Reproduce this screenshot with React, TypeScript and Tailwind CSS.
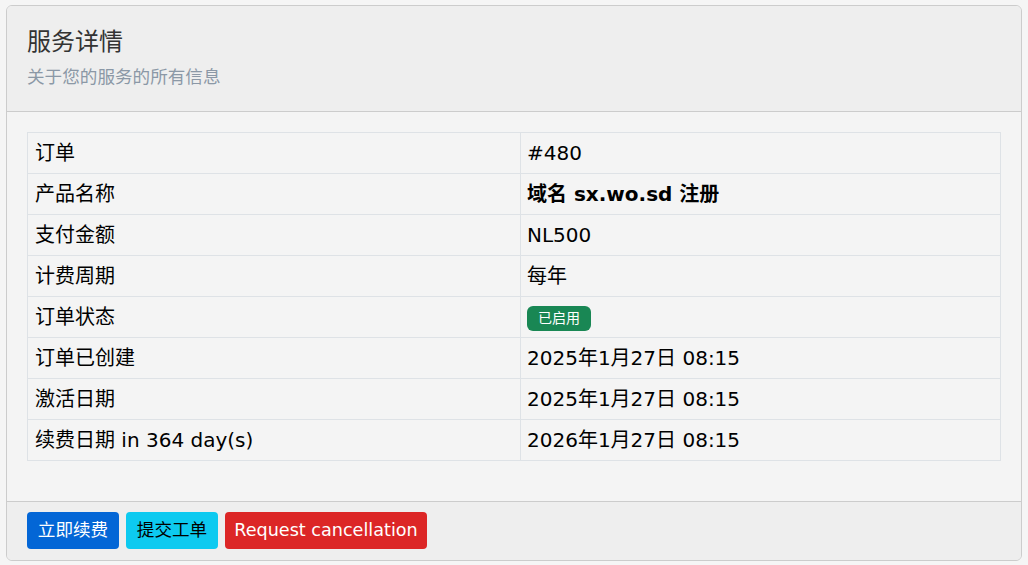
const rows: { label: string; value: React.ReactNode }[] = [
  { label: "订单", value: "#480" },
  { label: "产品名称", value: <span className="font-bold">域名 sx.wo.sd 注册</span> },
  { label: "支付金额", value: "NL500" },
  { label: "计费周期", value: "每年" },
  {
    label: "订单状态",
    value: (
      <span className="inline-block rounded-md bg-[#198754] px-[11px] py-[3px] align-middle text-[14px] leading-[19px] text-white">
        已启用
      </span>
    ),
  },
  { label: "订单已创建", value: "2025年1月27日 08:15" },
  { label: "激活日期", value: "2025年1月27日 08:15" },
  { label: "续费日期 in 364 day(s)", value: "2026年1月27日 08:15" },
];

export default function App() {
  return (
    <div
      className="min-h-screen bg-[#f5f5f5] px-[6px] pt-[5px] text-black"
      style={{ fontFamily: '"DejaVu Sans", "Noto Sans CJK SC", sans-serif' }}
    >
      <div className="w-[1016px] overflow-hidden rounded-[6px] border border-[#cccccc] bg-[#f4f4f4]">
        {/* header */}
        <div className="border-b border-[#cccccc] bg-[#eeeeee] px-[20px] pt-[20px] pb-[21px]">
          <h2 className="text-[24px] leading-[32px] text-[#333]">服务详情</h2>
          <p className="mt-[6px] text-[17.6px] leading-[26px] text-[#8b98a6]">关于您的服务的所有信息</p>
        </div>

        {/* table */}
        <div className="px-[20px] pt-[20px] pb-[40px]">
          <table className="w-[974px] border-collapse text-[20px]">
            <tbody>
              {rows.map((r) => (
                <tr key={r.label} className="h-[41px]">
                  <td className="w-[493px] border border-[#dee2e6] px-[7px] align-middle leading-[28px]">{r.label}</td>
                  <td className="border border-[#dee2e6] px-[6px] align-middle leading-[28px]">{r.value}</td>
                </tr>
              ))}
            </tbody>
          </table>
        </div>

        {/* footer */}
        <div className="flex gap-[7px] border-t border-[#cccccc] bg-[#eeeeee] px-[20px] pt-[10px] pb-[11px]">
          <button className="h-[37px] w-[92px] rounded-[4px] bg-[#0366d6] text-[17.6px] text-white">立即续费</button>
          <button className="h-[37px] w-[92px] rounded-[4px] bg-[#0dcaf0] text-[17.6px] text-black">提交工单</button>
          <button className="h-[37px] w-[202px] rounded-[4px] bg-[#dc2626] text-[17.6px] text-white">
            Request cancellation
          </button>
        </div>
      </div>
    </div>
  );
}
